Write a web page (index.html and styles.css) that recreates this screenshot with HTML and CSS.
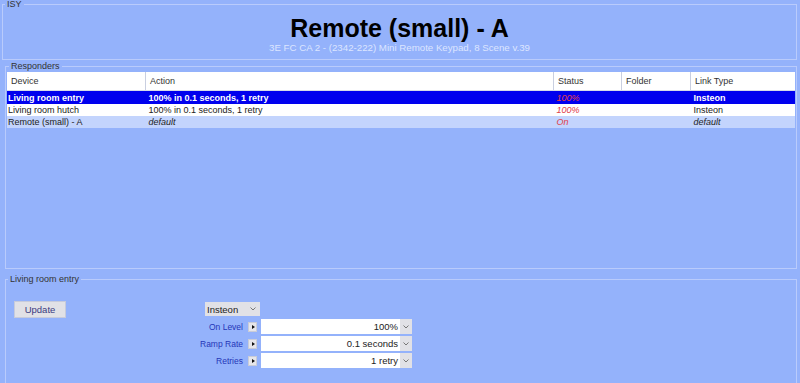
FILE: index.html
```html
<!DOCTYPE html>
<html lang="en">
<head>
  <meta charset="UTF-8" />
  <meta name="viewport" content="width=device-width, initial-scale=1" />
  <title>ISY - Remote (small) - A</title>
  <link rel="stylesheet" href="styles.css">
</head>
<body>
  <fieldset class="box isy">
    <legend>ISY</legend>
    <h1>Remote (small) - A</h1>
    <div class="subtitle">3E FC CA 2 - (2342-222) Mini Remote Keypad, 8 Scene v.39</div>
  </fieldset>

  <fieldset class="box responders">
    <legend>Responders</legend>
    <table>
      <thead>
        <tr>
          <th class="c-device">Device</th>
          <th class="c-action">Action</th>
          <th class="c-status">Status</th>
          <th class="c-folder">Folder</th>
          <th>Link Type</th>
        </tr>
      </thead>
      <tbody>
        <tr class="selected">
          <td>Living room entry</td>
          <td>100% in 0.1 seconds, 1 retry</td>
          <td class="status">100%</td>
          <td></td>
          <td>Insteon</td>
        </tr>
        <tr>
          <td>Living room hutch</td>
          <td>100% in 0.1 seconds, 1 retry</td>
          <td class="status">100%</td>
          <td></td>
          <td>Insteon</td>
        </tr>
        <tr class="self">
          <td>Remote (small) - A</td>
          <td><em>default</em></td>
          <td class="status">On</td>
          <td></td>
          <td><em>default</em></td>
        </tr>
      </tbody>
    </table>
  </fieldset>

  <fieldset class="box editor">
    <legend>Living room entry</legend>
    <div class="editor-body">
      <button class="btn">Update</button>
      <div class="controls">
        <div class="select">
          <span>Insteon</span>
          <svg class="chev" width="6" height="4" viewBox="0 0 6 4"><polyline points="0.5,0.5 3,3 5.5,0.5" fill="none" stroke="#777" stroke-width="1"/></svg>
        </div>

        <span class="label">On Level</span>
        <span class="play"></span>
        <div class="field">
          <span class="value">100%</span>
          <span class="drop"><svg width="6" height="4" viewBox="0 0 6 4"><polyline points="0.5,0.5 3,3 5.5,0.5" fill="none" stroke="#777" stroke-width="1"/></svg></span>
        </div>

        <span class="label">Ramp Rate</span>
        <span class="play"></span>
        <div class="field">
          <span class="value">0.1 seconds</span>
          <span class="drop"><svg width="6" height="4" viewBox="0 0 6 4"><polyline points="0.5,0.5 3,3 5.5,0.5" fill="none" stroke="#777" stroke-width="1"/></svg></span>
        </div>

        <span class="label">Retries</span>
        <span class="play"></span>
        <div class="field">
          <span class="value">1 retry</span>
          <span class="drop"><svg width="6" height="4" viewBox="0 0 6 4"><polyline points="0.5,0.5 3,3 5.5,0.5" fill="none" stroke="#777" stroke-width="1"/></svg></span>
        </div>
      </div>
    </div>
  </fieldset>
</body>
</html>
```

FILE: styles.css
```css
body {
  margin: 0;
  padding: 0 3px 0 2px;
  background: #94b2fb;
  font-family: 'Liberation Sans', Arial, sans-serif;
  font-size: 9px;
  color: #222;
  height: 383px;
  overflow: hidden;
}
.box {
  margin: 0;
  padding: 0;
  border: 1px solid #b9cbfc;
  min-width: 0;
}
.box legend {
  padding: 0 2px;
  margin-left: 2px;
  line-height: 8px;
  color: #333;
  font-size: 9px;
  text-align: left;
}
.isy {
  height: 58px;
}
.isy h1 {
  margin: 7px 0 0;
  font-size: 25px;
  line-height: 26px;
  color: #000;
  text-align: center;
}
.subtitle {
  color: #dce5ff;
  font-size: 9.7px;
  line-height: 13px;
  text-align: center;
}
.responders {
  margin: 2px 0 0 3px;
  height: 203px;
  padding: 2px 1px 0;
}
table {
  width: 100%;
  border-collapse: collapse;
  table-layout: fixed;
}
th {
  background: #fff;
  font-weight: normal;
  text-align: left;
  color: #333;
  height: 18px;
  padding: 0 4px;
  border-left: 1px solid #c9cfe0;
  border-bottom: 1px solid #d6dbe8;
}
th:first-child {
  border-left: none;
}
.c-device { width: 130px; }
.c-action { width: 399px; }
.c-status { width: 59px; }
.c-folder { width: 60px; }
td {
  padding: 0 3px;
  height: 12px;
  line-height: 12px;
  white-space: nowrap;
  overflow: hidden;
}
td:first-child {
  padding-left: 1px;
}
tbody tr {
  background: #fff;
}
tr.selected {
  background: #0000ee;
  color: #fff;
  font-weight: bold;
}
tr.selected td {
  height: 13px;
}
tr.self {
  background: #c3d4fd;
}
.status {
  color: #e0404a;
  font-style: italic;
  font-weight: normal;
}
.editor {
  margin: 6px 0 0 3px;
  height: 120px;
}
.editor-body {
  display: flex;
  align-items: flex-start;
  padding: 18px 0 0 8px;
}
.btn {
  width: 52px;
  height: 17px;
  padding: 0;
  background: #e1e1e6;
  border: 1px solid #c7cbdb;
  color: #3a3a80;
  font-family: inherit;
  font-size: 9.5px;
}
.controls {
  margin-left: 139px;
  display: grid;
  grid-template-columns: 38px 18px 151px;
  grid-template-rows: 16px;
  grid-auto-rows: 15px;
  row-gap: 2px;
  align-items: center;
}
.select {
  grid-column: 1 / 3;
  justify-self: start;
  width: 55px;
  height: 14px;
  padding: 0 4px 0 2px;
  background: #e1e1e6;
  color: #222;
  font-size: 9.5px;
  display: flex;
  align-items: center;
  justify-content: space-between;
  box-sizing: border-box;
}
.label {
  grid-column: 1;
  justify-self: end;
  white-space: nowrap;
  color: #2436b8;
  font-size: 8.5px;
}
.play {
  grid-column: 2;
  justify-self: start;
  margin-left: 5px;
  width: 9px;
  height: 10px;
  background: #e6e6ea;
  border: 1px solid #c9ccd8;
  box-sizing: border-box;
  position: relative;
}
.play::after {
  content: "";
  position: absolute;
  left: 3px;
  top: 2px;
  border-left: 3px solid #111;
  border-top: 2.5px solid transparent;
  border-bottom: 2.5px solid transparent;
}
.field {
  grid-column: 3;
  display: flex;
  height: 15px;
}
.field .value {
  flex: 1;
  background: #fff;
  text-align: right;
  line-height: 15px;
  padding-right: 2px;
  font-size: 9.5px;
}
.field .drop {
  width: 12px;
  background: #e1e1e6;
  display: flex;
  align-items: center;
  justify-content: center;
}
```
